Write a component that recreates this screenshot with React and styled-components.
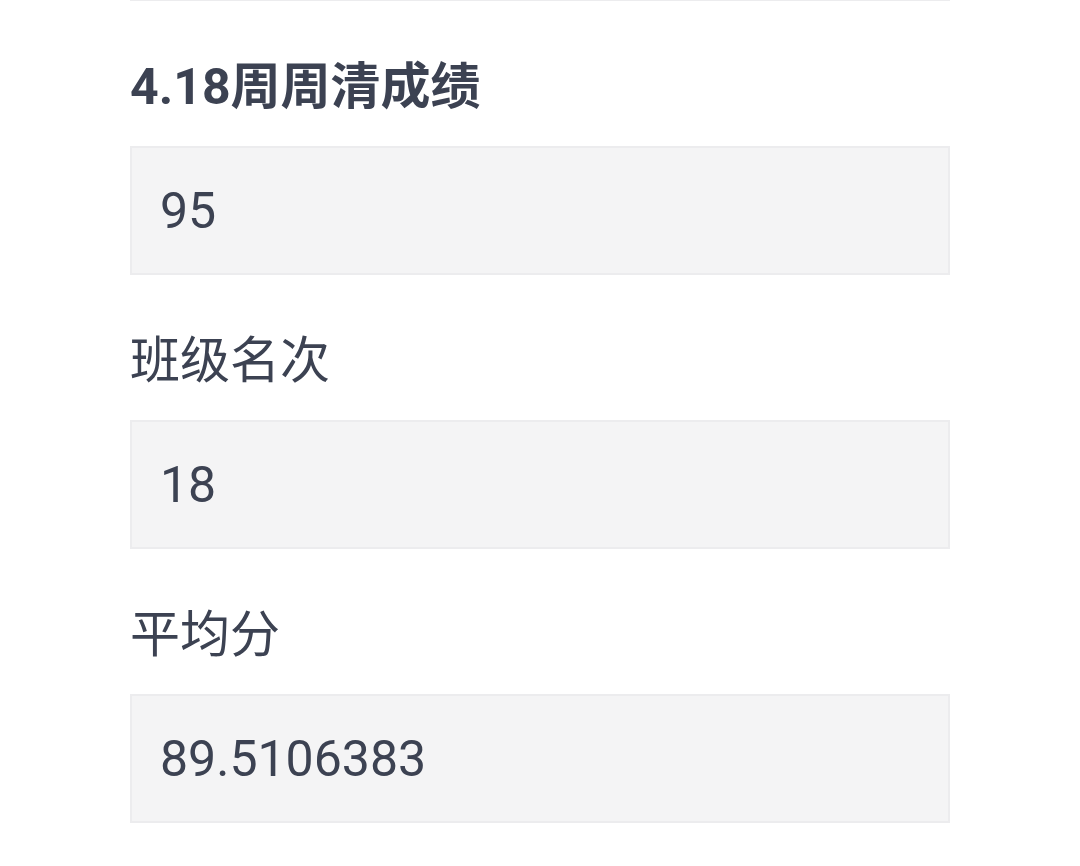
import styled, { createGlobalStyle } from 'styled-components'

const Global = createGlobalStyle`
  html, body { margin: 0; padding: 0; background: #fff; }
  body { font-family: Roboto, "Noto Sans CJK SC", sans-serif; color: #3c4252; }
  * { box-sizing: border-box; }
`

const Page = styled.div`
  width: 1080px;
  height: 866px;
  overflow: hidden;
  padding: 0 130px;
`
const Form = styled.div`
  display: flex;
  flex-direction: column;
  margin-top: -128px;
`
const Field = styled.div`
  display: flex;
  flex-direction: column;
`
const Label = styled.div`
  font-size: 50px;
  line-height: 60px;
  font-weight: ${p => (p.$bold ? 700 : 400)};
  margin: 56px 0 29px;
  white-space: nowrap;
`
const Box = styled.input`
  display: block;
  width: 820px;
  height: 129px;
  padding: 0 28px;
  border: 2px solid #ececee;
  border-radius: 0;
  background: #f4f4f5;
  font-family: Roboto, "Noto Sans CJK SC", sans-serif;
  font-size: 50px;
  color: #3c4252;
  outline: none;
`

const fields = [
  { label: '4.18周周清成绩', value: '95', bold: true },
  { label: '班级名次', value: '18' },
  { label: '平均分', value: '89.5106383' },
]

export default function App() {
  return (
    <Page>
      <Global />
      <Form>
        <Box readOnly value="" />
        {fields.map(f => (
          <Field key={f.label}>
            <Label $bold={f.bold}>{f.label}</Label>
            <Box readOnly value={f.value} />
          </Field>
        ))}
      </Form>
    </Page>
  )
}
